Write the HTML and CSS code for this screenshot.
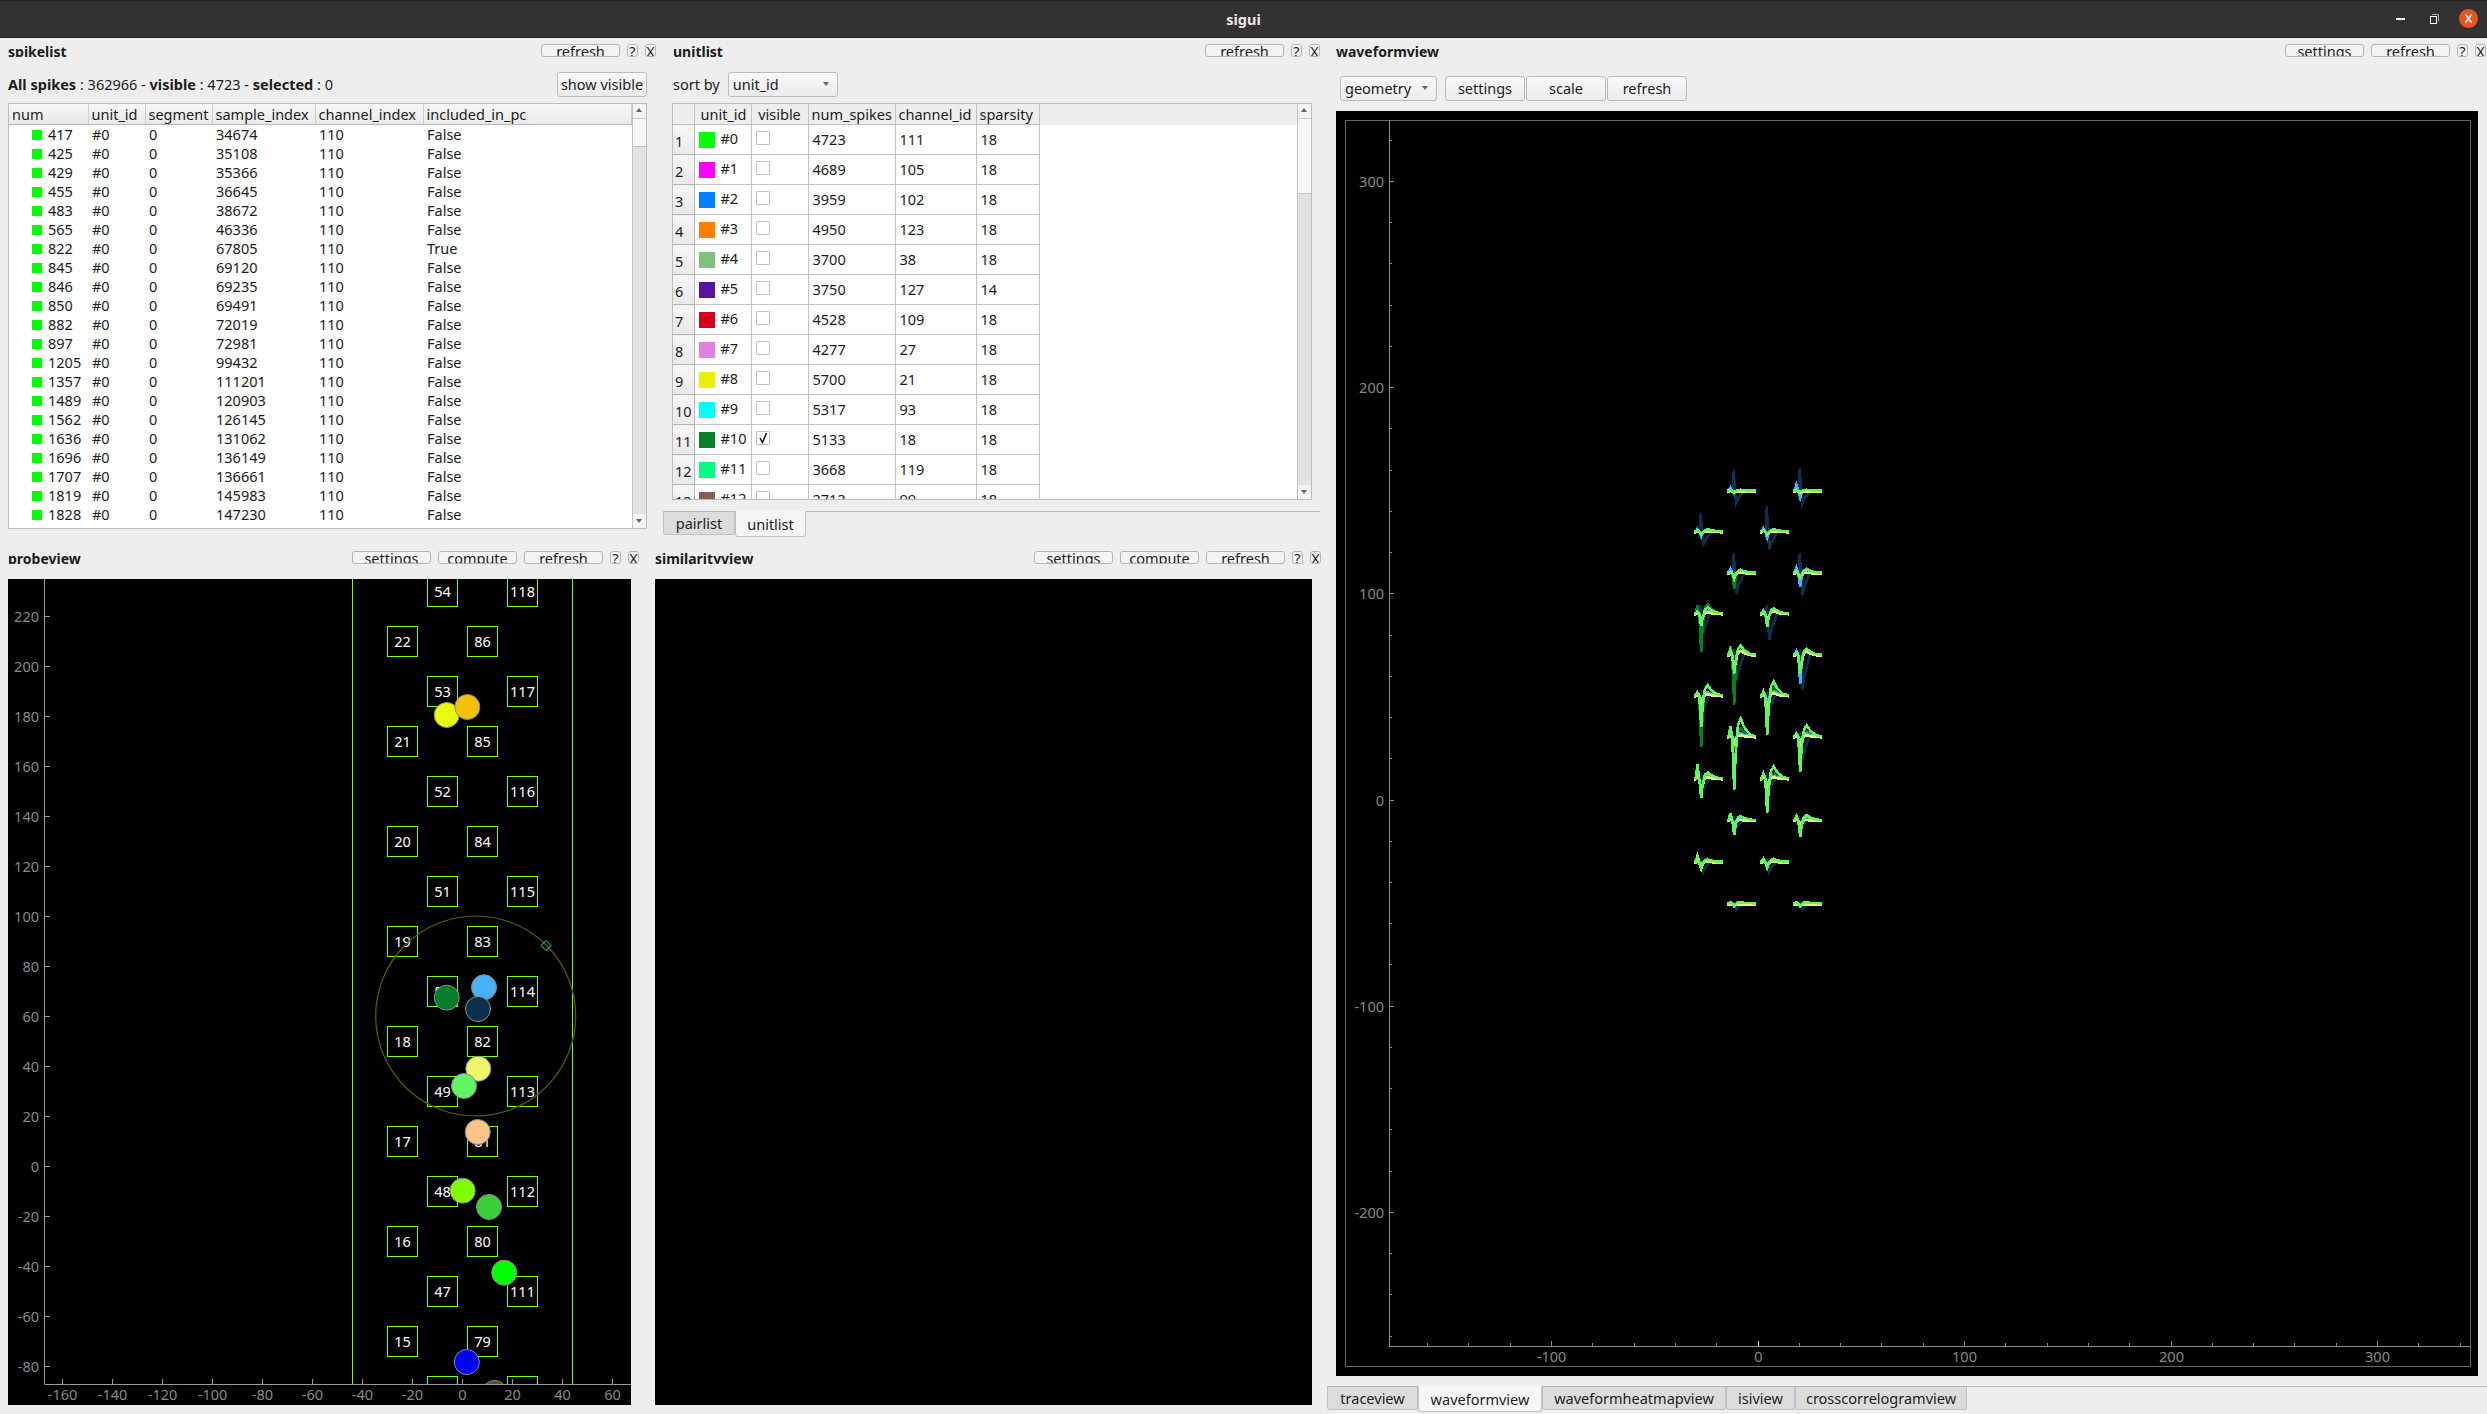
FILE: index.html
```html
<!DOCTYPE html>
<html lang="en">
<head>
  <meta charset="UTF-8">
  <title>sigui</title>
  <link rel="stylesheet" href="styles.css">
</head>
<body>
  <header class="titlebar">
    <span class="app-title">sigui</span>
    <div class="win-buttons">
      <svg class="win-min" width="9" height="3"><rect width="9" height="2" y="1" fill="#fff"/></svg>
      <svg class="win-max" width="10" height="10"><rect x="1.5" y="2.5" width="6" height="7" fill="none" stroke="#fff"/><path d="M3 .5h6.5v7" fill="none" stroke="#aaa"/></svg>
      <svg class="win-close" width="19" height="19"><circle cx="9.5" cy="9.5" r="9.5" fill="#e95420"/><path d="M6.5 5.5l6 8M12.5 5.5l-6 8" stroke="#fff" stroke-width="1.4"/></svg>
    </div>
  </header>

  <main class="workspace">
    <div class="left-area">
      <div class="top-row">
        <!-- spikelist -->
        <section class="dock spikelist">
          <div class="dock-head">
            <h2 class="dock-title">spikelist</h2>
            <button class="tool-btn">refresh</button>
            <button class="tool-btn small">?</button>
            <button class="tool-btn small">X</button>
          </div>
          <div class="info-row">
            <span><b>All spikes</b> : 362966 - <b>visible</b> : 4723 - <b>selected</b> : 0</span>
            <button class="push-btn show-visible">show visible</button>
          </div>
          <div class="list-box spike-box">
            <div class="list-scroll">
              <table class="spike-table">
                <colgroup><col class="c79"><col class="c57"><col class="c67"><col class="c103"><col class="c108"><col></colgroup>
                <thead><tr><th>num</th><th>unit_id</th><th>segment</th><th>sample_index</th><th>channel_index</th><th>included_in_pc</th></tr></thead>
                <tbody>
                  <tr><td class="num"><i class="swatch u0"></i>417</td><td>#0</td><td>0</td><td>34674</td><td>110</td><td>False</td></tr>
                  <tr><td class="num"><i class="swatch u0"></i>425</td><td>#0</td><td>0</td><td>35108</td><td>110</td><td>False</td></tr>
                  <tr><td class="num"><i class="swatch u0"></i>429</td><td>#0</td><td>0</td><td>35366</td><td>110</td><td>False</td></tr>
                  <tr><td class="num"><i class="swatch u0"></i>455</td><td>#0</td><td>0</td><td>36645</td><td>110</td><td>False</td></tr>
                  <tr><td class="num"><i class="swatch u0"></i>483</td><td>#0</td><td>0</td><td>38672</td><td>110</td><td>False</td></tr>
                  <tr><td class="num"><i class="swatch u0"></i>565</td><td>#0</td><td>0</td><td>46336</td><td>110</td><td>False</td></tr>
                  <tr><td class="num"><i class="swatch u0"></i>822</td><td>#0</td><td>0</td><td>67805</td><td>110</td><td>True</td></tr>
                  <tr><td class="num"><i class="swatch u0"></i>845</td><td>#0</td><td>0</td><td>69120</td><td>110</td><td>False</td></tr>
                  <tr><td class="num"><i class="swatch u0"></i>846</td><td>#0</td><td>0</td><td>69235</td><td>110</td><td>False</td></tr>
                  <tr><td class="num"><i class="swatch u0"></i>850</td><td>#0</td><td>0</td><td>69491</td><td>110</td><td>False</td></tr>
                  <tr><td class="num"><i class="swatch u0"></i>882</td><td>#0</td><td>0</td><td>72019</td><td>110</td><td>False</td></tr>
                  <tr><td class="num"><i class="swatch u0"></i>897</td><td>#0</td><td>0</td><td>72981</td><td>110</td><td>False</td></tr>
                  <tr><td class="num"><i class="swatch u0"></i>1205</td><td>#0</td><td>0</td><td>99432</td><td>110</td><td>False</td></tr>
                  <tr><td class="num"><i class="swatch u0"></i>1357</td><td>#0</td><td>0</td><td>111201</td><td>110</td><td>False</td></tr>
                  <tr><td class="num"><i class="swatch u0"></i>1489</td><td>#0</td><td>0</td><td>120903</td><td>110</td><td>False</td></tr>
                  <tr><td class="num"><i class="swatch u0"></i>1562</td><td>#0</td><td>0</td><td>126145</td><td>110</td><td>False</td></tr>
                  <tr><td class="num"><i class="swatch u0"></i>1636</td><td>#0</td><td>0</td><td>131062</td><td>110</td><td>False</td></tr>
                  <tr><td class="num"><i class="swatch u0"></i>1696</td><td>#0</td><td>0</td><td>136149</td><td>110</td><td>False</td></tr>
                  <tr><td class="num"><i class="swatch u0"></i>1707</td><td>#0</td><td>0</td><td>136661</td><td>110</td><td>False</td></tr>
                  <tr><td class="num"><i class="swatch u0"></i>1819</td><td>#0</td><td>0</td><td>145983</td><td>110</td><td>False</td></tr>
                  <tr><td class="num"><i class="swatch u0"></i>1828</td><td>#0</td><td>0</td><td>147230</td><td>110</td><td>False</td></tr>
                  <tr><td class="num"><i class="swatch u0"></i>1860</td><td>#0</td><td>0</td><td>149218</td><td>110</td><td>False</td></tr>
                </tbody>
              </table>
            </div>
            <div class="scrollbar">
              <span class="sb-arrow up"></span><span class="sb-handle spike-handle"></span><span class="sb-track"></span><span class="sb-arrow down"></span>
            </div>
          </div>
        </section>

        <!-- unitlist -->
        <section class="dock unitlist">
          <div class="dock-head">
            <h2 class="dock-title">unitlist</h2>
            <button class="tool-btn">refresh</button>
            <button class="tool-btn small">?</button>
            <button class="tool-btn small">X</button>
          </div>
          <div class="sort-row">
            <span>sort by</span>
            <div class="combo sort-combo">unit_id<i class="combo-arrow"></i></div>
          </div>
          <div class="list-box unit-box">
            <div class="list-scroll">
              <table class="unit-table">
                <colgroup><col class="c21"><col class="c57"><col class="c57"><col class="c87"><col class="c81"><col class="c63"><col></colgroup>
                <thead><tr><th></th><th class="indent">unit_id</th><th class="center">visible</th><th>num_spikes</th><th>channel_id</th><th>sparsity</th><th class="filler"></th></tr></thead>
                <tbody>
                  <tr><th>1</th><td class="unit-cell"><i class="unit-swatch u0"></i>#0</td><td><span class="check"></span></td><td>4723</td><td>111</td><td>18</td><td class="filler"></td></tr>
                  <tr><th>2</th><td class="unit-cell"><i class="unit-swatch u1"></i>#1</td><td><span class="check"></span></td><td>4689</td><td>105</td><td>18</td><td class="filler"></td></tr>
                  <tr><th>3</th><td class="unit-cell"><i class="unit-swatch u2"></i>#2</td><td><span class="check"></span></td><td>3959</td><td>102</td><td>18</td><td class="filler"></td></tr>
                  <tr><th>4</th><td class="unit-cell"><i class="unit-swatch u3"></i>#3</td><td><span class="check"></span></td><td>4950</td><td>123</td><td>18</td><td class="filler"></td></tr>
                  <tr><th>5</th><td class="unit-cell"><i class="unit-swatch u4"></i>#4</td><td><span class="check"></span></td><td>3700</td><td>38</td><td>18</td><td class="filler"></td></tr>
                  <tr><th>6</th><td class="unit-cell"><i class="unit-swatch u5"></i>#5</td><td><span class="check"></span></td><td>3750</td><td>127</td><td>14</td><td class="filler"></td></tr>
                  <tr><th>7</th><td class="unit-cell"><i class="unit-swatch u6"></i>#6</td><td><span class="check"></span></td><td>4528</td><td>109</td><td>18</td><td class="filler"></td></tr>
                  <tr><th>8</th><td class="unit-cell"><i class="unit-swatch u7"></i>#7</td><td><span class="check"></span></td><td>4277</td><td>27</td><td>18</td><td class="filler"></td></tr>
                  <tr><th>9</th><td class="unit-cell"><i class="unit-swatch u8"></i>#8</td><td><span class="check"></span></td><td>5700</td><td>21</td><td>18</td><td class="filler"></td></tr>
                  <tr><th>10</th><td class="unit-cell"><i class="unit-swatch u9"></i>#9</td><td><span class="check"></span></td><td>5317</td><td>93</td><td>18</td><td class="filler"></td></tr>
                  <tr><th>11</th><td class="unit-cell"><i class="unit-swatch u10"></i>#10</td><td><span class="check"><svg width="11" height="12"><path d="M2 6l2.500 4.500L8.500 1" fill="none" stroke="#111" stroke-width="1.500"/></svg></span></td><td>5133</td><td>18</td><td>18</td><td class="filler"></td></tr>
                  <tr><th>12</th><td class="unit-cell"><i class="unit-swatch u11"></i>#11</td><td><span class="check"></span></td><td>3668</td><td>119</td><td>18</td><td class="filler"></td></tr>
                  <tr><th>13</th><td class="unit-cell"><i class="unit-swatch u12"></i>#12</td><td><span class="check"></span></td><td>2713</td><td>99</td><td>18</td><td class="filler"></td></tr>
                </tbody>
              </table>
            </div>
            <div class="scrollbar">
              <span class="sb-arrow up"></span><span class="sb-handle unit-handle"></span><span class="sb-track"></span><span class="sb-arrow down"></span>
            </div>
          </div>
          <div class="tabbar list-tabs">
            <span class="tab">pairlist</span>
            <span class="tab active">unitlist</span>
            <span class="tab-rest"></span>
          </div>
        </section>
      </div>

      <div class="bottom-row">
        <!-- probeview -->
        <section class="dock probeview">
          <div class="dock-head">
            <h2 class="dock-title">probeview</h2>
            <button class="tool-btn">settings</button>
            <button class="tool-btn">compute</button>
            <button class="tool-btn">refresh</button>
            <button class="tool-btn small">?</button>
            <button class="tool-btn small">X</button>
          </div>
          <svg id="probe-plot" class="plot probe-plot" viewBox="8 579 623 826"></svg>
        </section>

        <!-- similarityview -->
        <section class="dock similarityview">
          <div class="dock-head">
            <h2 class="dock-title">similarityview</h2>
            <button class="tool-btn">settings</button>
            <button class="tool-btn">compute</button>
            <button class="tool-btn">refresh</button>
            <button class="tool-btn small">?</button>
            <button class="tool-btn small">X</button>
          </div>
          <div class="plot similarity-plot"></div>
        </section>
      </div>
    </div>

    <!-- waveformview -->
    <section class="dock waveformview">
      <div class="dock-head">
        <h2 class="dock-title">waveformview</h2>
        <button class="tool-btn">settings</button>
        <button class="tool-btn">refresh</button>
        <button class="tool-btn small">?</button>
        <button class="tool-btn small">X</button>
      </div>
      <div class="wave-controls">
        <div class="combo geometry-combo">geometry<i class="combo-arrow"></i></div>
        <button class="push-btn wave-btn">settings</button>
        <button class="push-btn wave-btn">scale</button>
        <button class="push-btn wave-btn">refresh</button>
      </div>
      <svg id="wave-plot" class="plot wave-plot" viewBox="1336 111 1142 1265"></svg>
      <div class="tabbar view-tabs">
        <span class="tab">traceview</span>
        <span class="tab active">waveformview</span>
        <span class="tab">waveformheatmapview</span>
        <span class="tab">isiview</span>
        <span class="tab">crosscorrelogramview</span>
        <span class="tab-rest"></span>
      </div>
    </section>
  </main>
  <script src="script.js"></script>
</body>
</html>
```

FILE: styles.css
```css
html, body {
  width: 100%;
  height: 100%;
  padding: 0;
  margin: 0;
  overflow: hidden;
}

body {
  display: flex;
  flex-direction: column;
  background: #eee;
  color: #1c1c1c;
  font-family: "Noto Sans", "Open Sans", sans-serif;
  font-size: 14.5px;
}

button {
  font: inherit;
  color: inherit;
  padding: 0;
}

/* window title */
.titlebar {
  position: relative;
  display: flex;
  justify-content: center;
  align-items: center;
  height: 38px;
  box-sizing: border-box;
  flex: none;
  background: #333131;
  border-top: 1px solid #222;
  border-bottom: 1px solid #222;
}

.app-title {
  color: #e8e8e8;
  font-weight: bold;
}

.win-buttons {
  position: absolute;
  right: 9px;
  top: 8px;
  display: flex;
  align-items: center;
  gap: 24px;
}

.win-close {
  margin-left: -4px;
}

.workspace {
  display: flex;
  flex: 1;
  min-height: 0;
}

.left-area {
  width: 1327px;
  flex: none;
}

.top-row {
  display: flex;
  height: 502px;
}

.bottom-row {
  display: flex;
  height: 874px;
}

/* docks */
.dock {
  box-sizing: border-box;
  flex: none;
}

.spikelist {
  width: 664px;
  padding: 6px 8px 0;
}

.unitlist {
  width: 663px;
  padding: 6px 7px 0 8px;
}

.unitlist .dock-head,
.unitlist .sort-row {
  margin-left: 1px;
}

.probeview {
  width: 647px;
  padding: 11px 8px 0;
}

.similarityview {
  width: 680px;
  padding: 11px 6px 0 8px;
}

.waveformview {
  width: 1160px;
  padding: 6px 1px 0 9px;
}

.dock-head {
  display: flex;
  gap: 7px;
  height: 13px;
}

.dock-title {
  flex: 1;
  height: 13px;
  margin: 0;
  overflow: hidden;
  font-size: 14px;
  line-height: 16px;
  font-weight: bold;
}

.tool-btn {
  width: 79px;
  height: 13px;
  box-sizing: border-box;
  overflow: hidden;
  border: 1px solid #b5b5b5;
  border-radius: 3px;
  background: #f4f4f4;
  line-height: 12px;
}

.tool-btn.small {
  width: 11px;
}

.push-btn {
  height: 25px;
  box-sizing: border-box;
  padding-bottom: 2px;
  border: 1px solid #bcbcbc;
  border-radius: 3px;
  background: linear-gradient(#f8f8f8, #ececec);
}

.info-row {
  display: flex;
  justify-content: space-between;
  align-items: center;
  height: 25px;
  margin: 15px 9px 0 0;
}

.info-row span,
.sort-row span {
  margin-bottom: 2px;
}

.show-visible {
  width: 90px;
}

.sort-row {
  display: flex;
  align-items: center;
  gap: 8px;
  height: 25px;
  margin-top: 15px;
}

.combo {
  display: flex;
  justify-content: space-between;
  align-items: center;
  height: 25px;
  box-sizing: border-box;
  padding: 0 8px 2px 4px;
  border: 1px solid #bcbcbc;
  border-radius: 3px;
  background: linear-gradient(#f8f8f8, #ececec);
}

.combo-arrow {
  width: 0;
  height: 0;
  border-style: solid;
  border-width: 4px 3.5px 0;
  border-color: #666 transparent transparent;
}

.sort-combo {
  width: 110px;
}

/* tables */
.list-box {
  display: flex;
  box-sizing: border-box;
  margin-top: 6px;
  border: 1px solid #bdbdbd;
  background: #fff;
}

.spike-box {
  width: 639px;
  height: 426px;
}

.unit-box {
  width: 640px;
  height: 397px;
}

.list-scroll {
  flex: 1;
  min-width: 0;
  overflow: hidden;
}

table {
  width: 100%;
  table-layout: fixed;
  border-collapse: collapse;
}

.c21 { width: 21px; }
.c57 { width: 57px; }
.c63 { width: 63px; }
.c67 { width: 67px; }
.c79 { width: 79px; }
.c81 { width: 81px; }
.c87 { width: 87px; }
.c103 { width: 103px; }
.c108 { width: 108px; }

th {
  padding: 0 0 0 3px;
  font-weight: normal;
  text-align: left;
  white-space: nowrap;
  background: linear-gradient(#f6f6f6, #e9e9e9);
}

.spike-table th {
  height: 20px;
  box-sizing: border-box;
  border-right: 1px solid #cdcdcd;
  border-bottom: 1px solid #b9b9b9;
}

.spike-table td {
  height: 19px;
  padding: 0 0 0 4px;
  line-height: 19px;
  white-space: nowrap;
}

.spike-table td.num {
  padding-left: 23px;
}

.swatch {
  display: inline-block;
  width: 10px;
  height: 10px;
  margin-right: 6px;
}

.u0 { background: #00ff00; }
.u1 { background: #ff00ff; }
.u2 { background: #0080ff; }
.u3 { background: #ff8000; }
.u4 { background: #80c080; }
.u5 { background: #5814a0; }
.u6 { background: #d40020; }
.u7 { background: #e080e0; }
.u8 { background: #e8f000; }
.u9 { background: #00ffff; }
.u10 { background: #088030; }
.u11 { background: #00ff80; }
.u12 { background: #886050; }

.unit-table thead th {
  height: 20px;
  box-sizing: border-box;
  background: #eee;
  border-right: 1px solid #c4c4c4;
  border-bottom: 1px solid #c4c4c4;
}

.unit-table thead th.indent {
  padding-left: 6px;
}

.unit-table thead th.center {
  text-align: center;
  padding-left: 0;
}

.unit-table tbody th {
  height: 30px;
  box-sizing: border-box;
  padding: 2px 0 0 2px;
  border-right: 1px solid #b5b5b5;
  border-bottom: 1px solid #b5b5b5;
}

.unit-table td {
  height: 30px;
  box-sizing: border-box;
  padding: 0 0 1px 4px;
  border-right: 1px solid #c4c4c4;
  border-bottom: 1px solid #c4c4c4;
  white-space: nowrap;
}

.unit-table .filler {
  background: none;
  border: none;
}

.unit-table thead .filler {
  background: #eee;
}

.unit-swatch {
  display: inline-block;
  vertical-align: middle;
  width: 16px;
  height: 16px;
  margin: 0 6px 2px 0;
}

.check {
  display: block;
  width: 14px;
  height: 14px;
  box-sizing: border-box;
  margin-bottom: 2px;
  padding-left: 1px;
  background: #fff;
  border: 1px solid #c0c0c0;
  border-radius: 1px;
}

.check svg {
  display: block;
}

/* scrollbars */
.scrollbar {
  display: flex;
  flex-direction: column;
  width: 13px;
  flex: none;
  border-left: 1px solid #c4c4c4;
  background: #e2e2e2;
}

.sb-arrow {
  position: relative;
  height: 14px;
  flex: none;
  background: #f3f3f3;
}

.sb-arrow::after {
  content: '';
  position: absolute;
  left: 3px;
  width: 0;
  height: 0;
  border-style: solid;
  border-color: transparent;
}

.sb-arrow.up {
  border-bottom: 1px solid #ccc;
}

.sb-arrow.up::after {
  top: 4px;
  border-width: 0 3.5px 4px;
  border-bottom-color: #666;
}

.sb-arrow.down::after {
  top: 5px;
  border-width: 4px 3.5px 0;
  border-top-color: #666;
}

.sb-handle {
  flex: none;
  background: #f7f7f7;
  border-bottom: 1px solid #c4c4c4;
}

.spike-handle {
  height: 27px;
}

.unit-handle {
  height: 74px;
}

.sb-track {
  flex: 1;
}

/* tabs */
.tabbar {
  display: grid;
}

.tab {
  display: flex;
  justify-content: center;
  align-items: center;
  box-sizing: border-box;
  height: 24px;
  padding-bottom: 1px;
  background: #dcdcdc;
  border: 1px solid #c2c2c2;
  border-top-color: #b8b8b8;
  border-radius: 0 0 3px 3px;
}

.tab.active {
  height: 26px;
  background: #f6f6f6;
  border-top: none;
  padding: 1px 0 0;
}

.tab-rest {
  border-top: 1px solid #bbb;
}

.list-tabs {
  grid-template-columns: 72px 71px 1fr;
  margin: 11px 0 0 -9px;
}

.view-tabs {
  grid-template-columns: 91px 124px 184px 69px 172px 1fr;
  margin: 10px -1px 0 -9px;
}

/* plots */
.plot {
  display: block;
  background: #000;
}

.probe-plot {
  width: 623px;
  height: 826px;
  margin-top: 15px;
}

.similarity-plot {
  width: 657px;
  height: 826px;
  margin-top: 15px;
}

.wave-controls {
  display: flex;
  gap: 1px;
  height: 25px;
  margin: 19px 0 0 4px;
}

.geometry-combo {
  width: 97px;
  margin-right: 7px;
}

.wave-btn {
  width: 80px;
}

.wave-plot {
  width: 1142px;
  height: 1265px;
  margin-top: 10px;
}

.plot text {
  font-family: "Noto Sans", "Open Sans", sans-serif;
  font-size: 14.5px;
}

.axis-label {
  fill: #888;
}

.contact-label {
  fill: #fff;
  text-anchor: middle;
}
```

FILE: script.js
```js
const SVG_NS = 'http://www.w3.org/2000/svg';

function add(parent, tag, attrs, text) {
  const el = document.createElementNS(SVG_NS, tag);
  for (const k in attrs) el.setAttribute(k, attrs[k]);
  if (text !== undefined) el.textContent = text;
  parent.appendChild(el);
  return el;
}

// ---- probe view ----
const probe = document.getElementById('probe-plot');
const px = v => 462.5 + v * 2.5;
const py = v => 1166.5 - v * 2.5;

const defs = add(probe, 'defs', {});
add(add(defs, 'clipPath', { id: 'probe-clip' }), 'rect', { x: 45, y: 579, width: 586, height: 805 });
const probeArea = add(probe, 'g', { 'clip-path': 'url(#probe-clip)' });

const contacts = [
  [442.5, [54, 53, 52, 51, 50, 49, 48, 47, 46], 591.5],
  [522.5, [118, 117, 116, 115, 114, 113, 112, 111, 110], 591.5],
  [402.5, [22, 21, 20, 19, 18, 17, 16, 15], 641.5],
  [482.5, [86, 85, 84, 83, 82, 81, 80, 79], 641.5],
];
contacts.forEach(([x, ids, top]) => {
  ids.forEach((id, i) => {
    const y = top + i * 100;
    add(probeArea, 'rect', { x: x - 15, y: y - 15, width: 30, height: 30, fill: 'none', stroke: '#7fff00' });
    // the label of a contact cut by the axis is not seen
    if (y < 1384) add(probeArea, 'text', { class: 'contact-label', x: x, y: y + 5 }, id);
  });
});

[352.5, 572.5].forEach(x => {
  add(probeArea, 'line', { x1: x, x2: x, y1: 579, y2: 1384, stroke: '#7fff00' });
});

add(probeArea, 'circle', { cx: 475.7, cy: 1016, r: 100, fill: 'none', stroke: '#5c5c00', 'stroke-width': 1.2 });
add(probeArea, 'path', { d: 'M546 940.500l5 5-5 5-5-5z', fill: 'none', stroke: '#49d8d0' });

const dots = [
  [446.7, 715, '#e6ff0f'], [467.3, 707, '#f5c008'],
  [446.7, 997.7, '#067d2b'], [484, 987.3, '#45b2f9'], [478, 1009, '#0d3050'],
  [478.3, 1068.7, '#eef76a'], [464, 1086, '#62f562'], [477.7, 1132, '#fcc488'],
  [462.7, 1190.7, '#80ff00'], [489, 1207, '#38cf38'],
  [504.2, 1272.7, '#00ff00'], [466.8, 1362, '#0000ff'], [494.5, 1393, '#5a4a2a'],
];
dots.forEach(([x, y, c]) => {
  add(probeArea, 'circle', { cx: x, cy: y, r: 12.5, fill: c, stroke: '#8c8c8c' });
});

// axes
add(probe, 'line', { x1: 44.5, x2: 44.5, y1: 579, y2: 1384, stroke: '#999' });
add(probe, 'line', { x1: 44.5, x2: 631, y1: 1384.5, y2: 1384.5, stroke: '#999' });
for (let v = -80; v <= 220; v += 20) {
  add(probe, 'line', { x1: 45, x2: 50, y1: py(v), y2: py(v), stroke: '#999' });
  add(probe, 'text', { class: 'axis-label', x: 39, y: py(v) + 5, 'text-anchor': 'end' }, v);
}
for (let v = -160; v <= 60; v += 20) {
  add(probe, 'line', { x1: px(v), x2: px(v), y1: 1379, y2: 1384, stroke: '#999' });
  add(probe, 'text', { class: 'axis-label', x: px(v), y: 1400, 'text-anchor': 'middle' }, v);
}

// ---- waveform view ----
const wave = document.getElementById('wave-plot');
const wx = v => 1757.5 + v * 2.065;
const wy = v => 799.5 - v * 2.062;

add(wave, 'rect', { x: 1345.5, y: 120.5, width: 1125, height: 1246, fill: 'none', stroke: '#666' });
add(wave, 'line', { x1: 1389.5, x2: 1389.5, y1: 120, y2: 1346, stroke: '#8c8c8c' });
add(wave, 'line', { x1: 1389, x2: 2470, y1: 1346.5, y2: 1346.5, stroke: '#8c8c8c' });

for (let v = -260; v <= 320; v += 20) {
  const y = Math.round(wy(v)) + 0.5;
  add(wave, 'line', { x1: 1390, x2: v % 100 === 0 ? 1394 : 1392, y1: y, y2: y, stroke: '#8c8c8c' });
  if (v % 100 === 0) add(wave, 'text', { class: 'axis-label', x: 1384, y: y + 5, 'text-anchor': 'end' }, v);
}
for (let v = -160; v <= 340; v += 20) {
  const x = Math.round(wx(v)) + 0.5;
  add(wave, 'line', { x1: x, x2: x, y1: v % 100 === 0 ? 1341 : 1343, y2: 1346, stroke: v === 0 ? '#ddd' : '#8c8c8c' });
  if (v % 100 === 0) add(wave, 'text', { class: 'axis-label', x: x, y: 1362, 'text-anchor': 'middle' }, v);
}

const WAVE_W = 28.7;
const waveColors = ['#0d3050', '#067d2b', '#45b2f9', '#eef76a', '#62f562'];

// a unit on one channel is [pre-peak, trough, rebound] in pixels
function wavePath(x0, y0, [pre, down, reb], first) {
  const pts = first
    ? [[0, 0], [.2, 0], [.24, -pre], [.27, 0], [.32, down], [.4, down * .6], [.62, -reb], [.8, 0], [1, 0]]
    : [[0, 0], [.06, 0], [.12, -pre], [.18, 0], [.25, down], [.3, down * .35], [.38, -reb * .6], [.48, -reb], [.6, -reb * .5], [.8, -reb * .1], [1, 0]];
  return pts.map(([t, a]) => (x0 + t * WAVE_W).toFixed(1) + ',' + (y0 + a).toFixed(1)).join(' ');
}

// x, baseline, then navy, dark green, blue, yellow and green units
const channels = [
  [1727, 490.7, [21, 12, 0], [2, 4, 0], [3, 2, 0], [1, 1, 0], [1, 1, 1]],
  [1793, 490.7, [23, 13, 0], [2, 8, 0], [6, 7, 0], [1, 1, 0], [1, 1, 1]],
  [1694, 531.3, [18, 14, 0], [3, 6, 1], [2, 5, 1], [1, 2, 1], [1, 3, 2]],
  [1760, 531.3, [25, 18, 0], [2, 5, 1], [3, 7, 1], [2, 2, 1], [1, 3, 2]],
  [1727, 572.7, [20, 21, 1], [3, 16, 2], [4, 4, 2], [1, 4, 1], [1, 6, 3]],
  [1793, 572.7, [20, 22, 2], [3, 14, 2], [5, 14, 4], [1, 4, 1], [2, 5, 3]],
  [1694, 613.3, [8, 20, 3], [8, 39, 9], [2, 10, 2], [1, 10, 2], [2, 13, 6]],
  [1760, 613.3, [8, 27, 2], [3, 10, 4], [3, 12, 4], [1, 6, 3], [2, 14, 5]],
  [1727, 654.7, [3, 27, 3], [8, 50, 10], [1, 18, 3], [1, 18, 5], [5, 19, 9]],
  [1793, 654.7, [3, 35, 3], [2, 10, 4], [4, 29, 6], [1, 18, 4], [2, 19, 6]],
  [1694, 695.3, [2, 15, 4], [3, 52, 11], [2, 8, 3], [1, 8, 2], [3, 32, 10]],
  [1760, 695.3, [2, 14, 4], [2, 10, 8], [2, 10, 4], [1, 14, 3], [4, 40, 14]],
  [1727, 736.3, [1, 10, 6], [4, 14, 8], [2, 6, 3], [1, 6, 2], [10, 54, 18]],
  [1793, 736.3, [2, 24, 3], [1, 8, 5], [3, 6, 3], [1, 8, 2], [3, 36, 11]],
  [1694, 778.3, [3, 12, 4], [7, 8, 5], [2, 20, 3], [3, 18, 2], [14, 20, 6]],
  [1760, 778.3, [3, 12, 4], [2, 8, 5], [3, 10, 2], [3, 8, 2], [5, 35, 12]],
  [1727, 820, [2, 8, 2], [3, 5, 3], [2, 6, 2], [1, 8, 1], [7, 15, 4]],
  [1793, 820, [1, 6, 2], [2, 5, 2], [1, 5, 2], [1, 6, 1], [4, 17, 5]],
  [1694, 861.7, [1, 10, 1], [4, 6, 3], [1, 3, 1], [1, 6, 1], [6, 6, 2]],
  [1760, 861.7, [1, 10, 1], [1, 3, 2], [1, 3, 1], [1, 3, 1], [3, 6, 3]],
  [1727, 903.3, [0, 6, 0], [1, 2, 1], [0, 2, 1], [0, 2, 0], [1, 3, 1]],
  [1793, 903.3, [0, 6, 0], [0, 2, 1], [0, 3, 1], [0, 2, 0], [1, 3, 1]],
];
channels.forEach(([x, y, ...units]) => {
  units.forEach((u, i) => {
    add(wave, 'polyline', {
      points: wavePath(x, y + (i === 3 ? 1 : 0), u, i === 0),
      fill: 'none',
      stroke: waveColors[i],
      'stroke-width': 2.5,
      'shape-rendering': 'crispEdges',
    });
  });
});
```
